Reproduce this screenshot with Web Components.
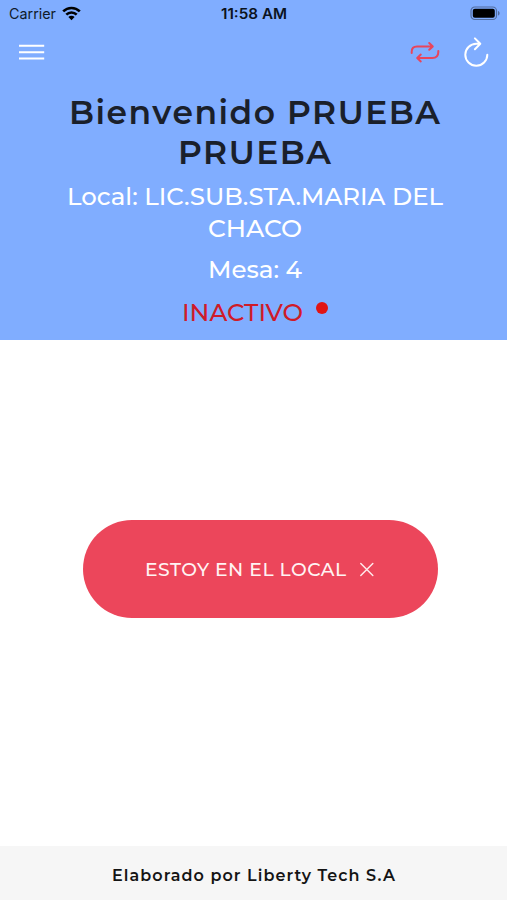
<!DOCTYPE html>
<html lang="es">
<head>
<meta charset="utf-8">
<title>Bienvenido</title>
<style>
    body {
        margin: 0;
        background: #fff;
        font-family: Montserrat, Inter, sans-serif;
    }
</style>
</head>
<body>
<app-screen>
    <status-bar slot="header"></status-bar>
    <nav-bar slot="header"></nav-bar>
    <welcome-info slot="header"></welcome-info>
    <local-button>
        <fit-line width="201" spacing="0.5">ESTOY EN EL LOCAL</fit-line>
    </local-button>
    <app-footer slot="footer">
        <fit-line width="283" spacing="1.1">Elaborado por Liberty Tech S.A</fit-line>
    </app-footer>
</app-screen>

<script>
// one line of text, stretched horizontally to the given width
class FitLine extends HTMLElement {
    constructor() {
        super();
        this.shadowDOM = this.attachShadow({ mode: "open" });
    }
    connectedCallback() {
        const width = Number(this.getAttribute("width"));
        const spacing = Number(this.getAttribute("spacing") || 0);
        this.shadowDOM.innerHTML = `
        <style>
        :host {
            display: block;
            width: ${width}px;
            white-space: nowrap;
            text-align: left;
        }
        span {
            display: inline-block;
            vertical-align: top;
            letter-spacing: ${spacing}px;
            transform-origin: 0 50%;
        }
        </style>
        <span><slot></slot></span>
        `;
        const span = this.shadowDOM.querySelector("span");
        const natural = span.getBoundingClientRect().width - spacing;
        span.style.transform = `scaleX(${width / natural})`;
    }
}

class StatusBar extends HTMLElement {
    constructor() {
        super();
        this.attachShadow({ mode: "open" }).innerHTML = `
        <style>
        :host {
            display: grid;
            grid-template-columns: 1fr auto 1fr;
            align-items: center;
            height: 27px;
            padding: 0 7px 0 9px;
            color: #101b2b;
            font: 14.5px Inter, sans-serif;
        }
        .carrier {
            display: flex;
            align-items: center;
            gap: 6px;
        }
        .time {
            color: #0b1320;
            font-size: 14px;
            font-weight: 600;
            margin-right: 2px;
        }
        .battery {
            justify-self: end;
        }
        svg {
            display: block;
        }
        </style>
        <div class="carrier">
            <fit-line width="47">Carrier</fit-line>
            <svg width="19" height="15" viewBox="0 0 19 15">
                <g fill="none" stroke="#000" stroke-width="2.6">
                    <path d="M1.2 5.4a11.8 11.8 0 0 1 16.6 0"/>
                    <path d="M4.3 8.7a7.4 7.4 0 0 1 10.4 0"/>
                </g>
                <path d="M6.4 11a4.4 4.4 0 0 1 6.2 0l-3.1 3.2z"/>
            </svg>
        </div>
        <fit-line class="time" width="66">11:58 AM</fit-line>
        <svg class="battery" width="30" height="15" viewBox="0 0 30 15">
            <rect x="1" y="1" width="25.5" height="12.5" rx="3.8" fill="none" stroke="#526d9f" stroke-width="1.2"/>
            <rect x="2.8" y="2.8" width="22" height="9" rx="2"/>
            <path d="M28 5v4.6c1-.4 1.6-1.2 1.6-2.3S29 5.4 28 5z" fill="#526d9f"/>
        </svg>
        `;
    }
}

class NavBar extends HTMLElement {
    constructor() {
        super();
        this.attachShadow({ mode: "open" }).innerHTML = `
        <style>
        :host {
            display: flex;
            align-items: center;
            height: 50px;
            padding: 0 17px 0 18px;
        }
        svg {
            display: block;
            fill: none;
            stroke: #fff;
            stroke-width: 2;
            stroke-linecap: round;
            stroke-linejoin: round;
        }
        .swap {
            margin-left: auto;
            margin-right: 22px;
            stroke: #e8455c;
        }
        </style>
        <svg width="28" height="20" viewBox="0 0 28 20">
            <path d="M1 3.8h25.2M1 10.2h25.2M1 16.5h25.2" stroke-linecap="butt"/>
        </svg>
        <svg class="swap" width="30" height="24" viewBox="0 0 30 24">
            <path d="M1.7 13V11.7Q1.7 6.4 7 6.4H22.6M19.2 3L22.8 6.4L19.2 9.8"/>
            <path d="M28.3 11V12Q28.3 18 22.3 18H7.4M10.8 14.6L7.2 18L10.8 21.4"/>
        </svg>
        <svg width="28" height="32" viewBox="0 0 28 32">
            <path d="M17.6 7.8H14.3A11 11 0 1 0 25.3 18.8M12.9 2.4L18.3 7.8L12.9 13.2"/>
        </svg>
        `;
    }
}

class WelcomeInfo extends HTMLElement {
    constructor() {
        super();
        this.attachShadow({ mode: "open" }).innerHTML = `
        <style>
        :host {
            display: flex;
            flex-direction: column;
            align-items: center;
            padding: 16px 0 12px 3px;
            color: #fff;
            font-size: 24.5px;
            font-weight: 500;
            line-height: 32px;
        }
        h1 {
            display: flex;
            flex-direction: column;
            align-items: center;
            margin: 0 2px 7px 0;
            color: #1a202b;
            font-size: 32.5px;
            font-weight: 600;
            line-height: 40px;
        }
        .mesa {
            margin: 9px 0 11px;
        }
        .status {
            display: flex;
            gap: 13px;
            color: #cf1b29;
        }
        .status i {
            width: 12px;
            height: 12px;
            margin-top: 6px;
            border-radius: 50%;
            background: #e01414;
        }
        </style>
        <h1>
            <fit-line width="371" spacing="1.5">Bienvenido PRUEBA</fit-line>
            <fit-line width="153" spacing="1.5">PRUEBA</fit-line>
        </h1>
        <fit-line width="376">Local: LIC.SUB.STA.MARIA DEL</fit-line>
        <fit-line width="94">CHACO</fit-line>
        <fit-line class="mesa" width="94">Mesa: 4</fit-line>
        <div class="status"><fit-line width="121">INACTIVO</fit-line><i></i></div>
        `;
    }
}

class LocalButton extends HTMLElement {
    constructor() {
        super();
        this.attachShadow({ mode: "open" }).innerHTML = `
        <style>
        :host {
            display: block;
        }
        button {
            display: flex;
            align-items: center;
            justify-content: center;
            gap: 13px;
            width: 355px;
            height: 98px;
            padding: 1px 2px 0 0;
            border: 0;
            border-radius: 49px;
            background: #ec465b;
            color: #fff3f3;
            font: 500 18.5px Montserrat, Inter, sans-serif;
        }
        svg {
            fill: none;
            stroke: #ffe9eb;
            stroke-width: 1.5;
            stroke-linecap: round;
        }
        </style>
        <button>
            <slot></slot>
            <svg width="15" height="15" viewBox="0 0 15 15"><path d="M1.8 1.5l12 12M13.8 1.5l-12 12"/></svg>
        </button>
        `;
    }
}

class AppFooter extends HTMLElement {
    constructor() {
        super();
        this.attachShadow({ mode: "open" }).innerHTML = `
        <style>
        :host {
            display: flex;
            align-items: center;
            justify-content: center;
            height: 54px;
            padding-top: 4px;
            box-sizing: border-box;
            background: #f6f6f6;
            color: #141414;
            font-size: 16.5px;
            font-weight: 600;
        }
        </style>
        <slot></slot>
        `;
    }
}

class AppScreen extends HTMLElement {
    constructor() {
        super();
        this.attachShadow({ mode: "open" }).innerHTML = `
        <style>
        :host {
            display: flex;
            flex-direction: column;
            height: 900px;
        }
        header {
            height: 340.4px;
            background: #80adff;
        }
        main {
            flex: 1;
            display: flex;
            justify-content: center;
            align-items: flex-start;
            padding: 179.3px 0 0 13px;
        }
        </style>
        <header><slot name="header"></slot></header>
        <main><slot></slot></main>
        <slot name="footer"></slot>
        `;
    }
}

customElements.define("app-screen", AppScreen);
customElements.define("status-bar", StatusBar);
customElements.define("nav-bar", NavBar);
customElements.define("welcome-info", WelcomeInfo);
customElements.define("local-button", LocalButton);
customElements.define("app-footer", AppFooter);
customElements.define("fit-line", FitLine);
</script>
</body>
</html>
